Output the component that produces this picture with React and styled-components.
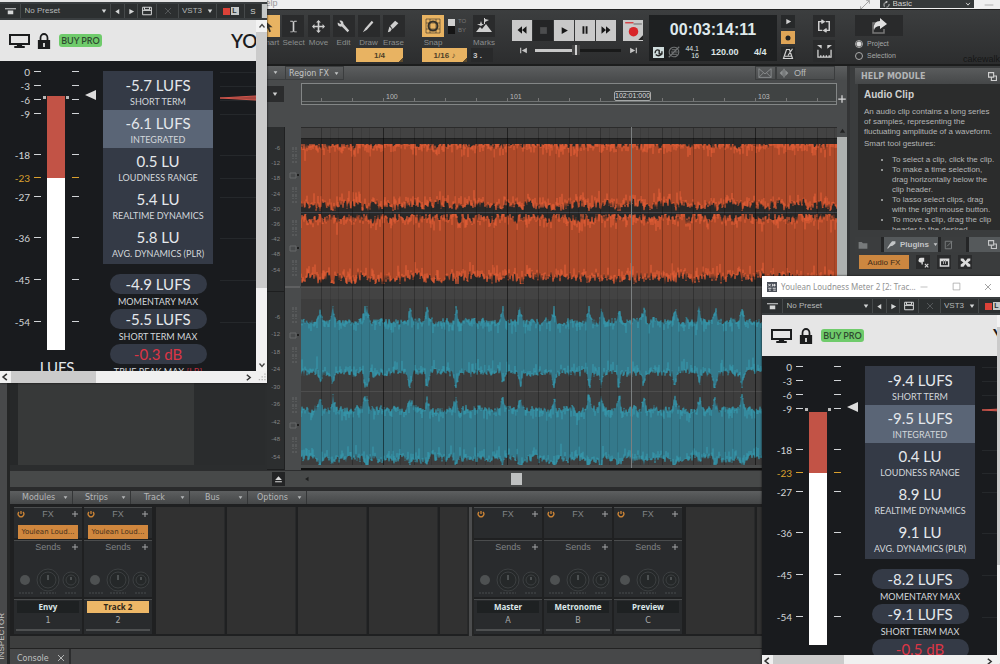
import { useState } from 'react';
import styled, { createGlobalStyle, css } from 'styled-components';

const GlobalStyle = createGlobalStyle`
  * { box-sizing: border-box; }
  body {
    margin: 0;
    background: #2a2b2c;
    font-family: "Liberation Sans", Arial, sans-serif;
    color: #b4b6b6;
  }
  button, select, input { font: inherit; color: inherit; margin: 0; }
  button { border: none; padding: 0; background: none; cursor: pointer; }
  select { appearance: none; border: none; background: none; padding: 0; outline: none; }
  ul { margin: 0; }
`;

/* ---------- icons ---------- */

const paths = {
  cursor: <path d="M4 1v12l3-3 2 5 2-1-2-5h4z" />,
  ibeam: <path d="M4 1h3l1 1 1-1h3v1H9v12h3v1H9l-1-1-1 1H4v-1h3V2H4z" />,
  move: <path d="M8 0l3 3H9v4h4V5l3 3-3 3V9H9v4h2l-3 3-3-3h2V9H3v2L0 8l3-3v2h4V3H5z" />,
  wrench: <path d="M1 3l3 2 1-1-2-3c3-1 5 1 5 4l7 8-2 2-7-7C3 9 0 6 1 3z" />,
  draw: <path d="M1 15l3-5 8-9 2 2-8 9z" />,
  erase: <path d="M1 15l2-7 3 3-2 3zM4 7l6-6 4 3-7 7z" />,
  snap: (
    <g fill="none" stroke="currentColor">
      <path d="M1 1h14v14H1zM5 1v14M11 1v14M1 5h14M1 11h14" strokeWidth="0.6" />
      <circle cx="8" cy="8" r="4.5" strokeWidth="2" />
    </g>
  ),
  marks: <path d="M0 14l4-5 2 2 4-5 6 8zM8 0h1v1l4 1-4 2v2H8zM1 6h3l1-3 1 3h2l-3 2z" />,
  rewind: <path d="M8 3v10L2 8zM14 3v10L8 8z" />,
  forward: <path d="M2 3v10l6-5zM8 3v10l6-5z" />,
  play: <path d="M3 2v12l11-6z" />,
  pause: <path d="M4 2h3v12H4zM9 2h3v12H9z" />,
  stop: <path d="M2 2h12v12H2z" />,
  start: <path d="M2 3h2v10H2zM14 3v10L5 8z" />,
  end: <path d="M12 3h2v10h-2zM2 3v10l9-5z" />,
  record: (
    <>
      <circle cx="8" cy="9" r="4" fill="#d8262a" />
      <path d="M1 1h7v1H1z" fill="#d8262a" />
      <path d="M8 2h7v1H8z" fill="#777" />
      <path d="M12 16h4v-4z" fill="#222" />
    </>
  ),
  dot: <circle cx="8" cy="8" r="5" />,
  metronome: (
    <path d="M6 2h4l4 12H2zM8 10l6-9M4 11h9" fill="none" stroke="currentColor" strokeWidth="1.6" />
  ),
  loop: (
    <path d="M6 3H2v10h4M10 3h4v10h-4M5 1l3 2-3 2M11 11l-3 2 3 2" fill="none" stroke="currentColor" strokeWidth="1.7" />
  ),
  punch: (
    <>
      <path d="M1 6v8h14V6M4 14v-2M7 14v-2M10 14v-2M13 14v-2" fill="none" stroke="currentColor" strokeWidth="1.4" />
      <path d="M0 1h5v4zM16 1h-5v4z" />
    </>
  ),
  share: (
    <>
      <path d="M5 5H2v10h11v-4" fill="none" stroke="#777" strokeWidth="1.5" />
      <path d="M3 12c-1-6 2-9 6-9V0l7 6-7 5V8C6 8 4 9 3 12z" />
    </>
  ),
  sync: (
    <>
      <path d="M0 0h16v16H0z" fill="#cfdcdc" />
      <path d="M3 9c0-4 3-6 6-4v5h4c0-4 0-4 0-4M4 11c3 3 8 2 9-2" fill="none" stroke="#222" strokeWidth="2" />
    </>
  ),
  mute: (
    <path d="M3 12a6 6 0 1 1 10-8 6 6 0 1 1-10 8zM1 15L15 1M5 5h7M4 8h9M5 11h7" fill="none" stroke="currentColor" strokeWidth="1.5" />
  ),
  power: (
    <path d="M8 2v6M4 4a5.6 5.6 0 1 0 8 0" fill="none" stroke="currentColor" strokeWidth="2.6" />
  ),
  plus: <path d="M7 2h2v5h5v2H9v5H7V9H2V7h5z" />,
  eject: <path d="M8 2l6 7H2zM2 11h12v2H2z" />,
  down: <path d="M2 4h12l-6 9z" />,
  left: <path d="M12 2v12L3 8z" />,
  up: <path d="M2 13h12L8 4z" />,
  undock: <path d="M1 1h9v8H1zM6 9v6h9V7h-5" fill="none" stroke="currentColor" strokeWidth="2" />,
  disk: (
    <path d="M1 2h14v12H1zM4 2v4h8V2M1 7h14" fill="none" stroke="currentColor" strokeWidth="1.6" />
  ),
  cross: <path d="M2 2l12 12M14 2L2 14" fill="none" stroke="currentColor" strokeWidth="1.8" />,
  square: <path d="M2 2h12v12H2z" fill="none" stroke="currentColor" strokeWidth="1.2" />,
  minus: <path d="M1 8h14" fill="none" stroke="currentColor" strokeWidth="1.2" />,
  menubar: <path d="M0 2h16v2H0zM4 6h8v7H4z" />,
  monitor: <path d="M0 1h16v11H0zM1.5 3v7h13V3zM6 12h4v1h2v2H4v-2h2z" fillRule="evenodd" />,
  lock: (
    <path d="M1 7h2V5a5 5 0 0 1 10 0v2h2v9H1zM5 7h6V5a3 3 0 0 0-6 0zM7 10v4h2v-4z" fillRule="evenodd" />
  ),
  chevUp: <path d="M3 11l5-6 5 6" fill="none" stroke="currentColor" strokeWidth="2.6" />,
  chevDown: <path d="M3 5l5 6 5-6" fill="none" stroke="currentColor" strokeWidth="2.6" />,
  chevLeft: <path d="M11 3L5 8l6 5" fill="none" stroke="currentColor" strokeWidth="2.6" />,
  chevRight: <path d="M5 3l6 5-6 5" fill="none" stroke="currentColor" strokeWidth="2.6" />,
  grip: <path d="M12 2h2v2h-2zM12 6h2v2h-2zM8 6h2v2H8zM12 10h2v2h-2zM8 10h2v2H8zM4 10h2v2H4z" fill="#b5b5b5" />,
  expand: <path d="M1 15L15 1M1 10v5h5M10 1h5v5" fill="none" stroke="currentColor" strokeWidth="1.4" />,
  swap: <path d="M3 13C1 7 3 3 8 2M8 14c4 0 6-3 6-7M6 0l4 2-4 3" fill="none" stroke="currentColor" strokeWidth="2" />,
  folder: <path d="M1 3h5l2 2h7v9H1z" />,
  plug: <path d="M0 15l5-8 4-5h6v4l-5 4-4 1-4 4zM4 4l4 4" />,
  notes: <path d="M2 2h10v12H2zM5 10l8-8" fill="none" stroke="currentColor" strokeWidth="1.6" />,
  fx: (
    <>
      <path d="M1 4a3 3 0 0 1 3-3h5v6H7v4H5V8H3a3 3 0 0 1-2-4z" />
      <path d="M10 10l5 5M15 10l-5 5" stroke="currentColor" strokeWidth="1.6" />
    </>
  ),
  table: (
    <path d="M1 2h14v12H1zM3 6v6h10V6zM6 5h1v5H6zM9 5h1v5H9z" fillRule="evenodd" />
  ),
  tree: <path d="M1 2h4l3 4 3-4h4v3l-4 3 4 3v3h-4l-3-4-3 4H1v-3l4-3-4-3z" />,
  envelope: <path d="M1 3v10h14V3M1 3l7 6 7-6M1 13l5-5M15 13l-5-5" fill="none" stroke="currentColor" />,
  nudge: <path d="M6 3v10L1 8zM10 3v10l5-5zM7 1h2v14H7z" />,
  app: (
    <>
      <path d="M0 0h16v16H0z" fill="#4a4f58" />
      <path d="M2 3l4 4M6 3L2 7M9 3v4M9 5h5M12 3v4M2 10h5M9 10h5M3 13h3M10 13h4" stroke="#e6e6e6" strokeWidth="1.5" />
    </>
  ),
};

const Glyph = styled.svg`
  display: block;
  flex: none;
  width: ${(p) => p.$w}px;
  height: ${(p) => p.$h || p.$w}px;
  fill: currentColor;
`;

const Icon = ({ name, size = 10, height }) => (
  <Glyph viewBox="0 0 16 16" preserveAspectRatio={height ? 'none' : 'xMidYMid'} $w={size} $h={height} aria-hidden="true">
    {paths[name]}
  </Glyph>
);

/* ---------- desktop ---------- */

const Desktop = styled.div`
  position: relative;
  display: flex;
  flex-direction: column;
  min-height: 100vh;
  overflow: hidden;
  background: #2a2b2c;
`;

const MenuStrip = styled.header`
  display: flex;
  align-items: flex-start;
  justify-content: flex-end;
  gap: 10px;
  height: 9px;
  padding-right: 6px;
  background: #efefef;
  color: #999;
  overflow: hidden;
`;

const HelpLink = styled.a`
  margin-right: auto;
  padding-left: 259px;
  font-size: 9px;
  line-height: 6px;
  color: #999;
  text-decoration: none;
`;

const BasicLabel = styled.label`
  display: flex;
  align-items: center;
  justify-content: space-between;
  width: 94px;
  height: 8px;
  padding: 0 3px;
  background: #353839;
  color: #d0d0d0;
`;

const BasicSelect = styled.select`
  width: 70px;
  height: 8px;
  font-size: 8px;
  line-height: 8px;
`;

const Toolbar = styled.div`
  display: flex;
  height: 57px;
  padding: 5px 0 0 256px;
  background: linear-gradient(#3c3e3f, #2c2d2e);
  border-top: 1px solid #222;
  border-bottom: 2px solid #1c1d1d;
  white-space: nowrap;
`;

const ToolGroup = styled.div`
  display: grid;
  grid-template-columns: repeat(${(p) => p.$cols}, 25px);
  align-content: start;
  justify-items: center;
`;

const ToolItem = styled.div`
  display: flex;
  flex-direction: column;
  align-items: center;
  gap: 1px;
  height: 33px;
  font-size: 8px;
  line-height: 9px;
  color: #8b8e8e;
`;

const ToolButton = styled.button`
  display: grid;
  place-items: center;
  width: 22px;
  height: 22px;
  color: ${(p) => (p.$on ? '#33302a' : '#cfcfcf')};
  background: ${(p) => (p.$on ? '#e8b362' : '#2a2b2c')};
`;

const AmberSelect = styled.select`
  width: ${(p) => p.$w}px;
  height: 14px;
  grid-column: ${(p) => p.$col || 'auto'};
  justify-self: start;
  text-align: center;
  font-size: 8px;
  font-weight: 700;
  background: linear-gradient(315deg, #5d4a2c 3px, #e8b362 3px);
  color: #4e3f28;
`;

const SnapGroup = styled.div`
  display: flex;
  flex-direction: column;
  width: 90px;
  margin-left: 16px;
`;

const SnapRow = styled.div`
  display: flex;
  gap: 4px;
`;

const SnapMode = styled.div`
  display: flex;
  flex-direction: column;
  justify-content: center;
  width: 21px;
  height: 22px;
  font-size: 6px;
  line-height: 9px;
  color: #777;
  padding-left: 10px;
  background: linear-gradient(#d0d0d0 50%, #151515 50%) 0 4px / 7px 15px no-repeat;
`;

const CountSelect = styled.select`
  width: 22px;
  height: 14px;
  padding-left: 2px;
  font-size: 8px;
  font-weight: 700;
  background: #28292a;
  color: #c8c8c8;
`;

const Transport = styled.div`
  display: grid;
  grid-template-rows: 22px 14px;
  row-gap: 2px;
  margin: 4px 0 0 0;
`;

const TransportRow = styled.div`
  display: flex;
  align-items: center;
  gap: 1px;
  color: #ccc;
`;

const Key = styled.button`
  display: grid;
  place-items: center;
  width: 20px;
  height: 21px;
  margin-left: ${(p) => (p.$gap ? 6 : 0)}px;
  background: ${(p) => (p.$dark ? '#242526' : '#c9c9c9')};
  color: ${(p) => (p.$dark ? '#4c4d4e' : '#181818')};
`;

const Seek = styled.button`
  display: grid;
  place-items: center;
  width: 22px;
  height: 12px;
  color: #c4c4c4;
`;

const Position = styled.input`
  appearance: none;
  width: 86px;
  height: 11px;
  background: linear-gradient(90deg, #c8c8c8 38px, #191a1a 38px) 0 4px / 100% 3px no-repeat;
  &::-webkit-slider-thumb {
    appearance: none;
    width: 8px;
    height: 10px;
    background: linear-gradient(90deg, #444 3px, #d0d0d0 3px 5px, #444 5px);
  }
`;

const Clock = styled.div`
  display: flex;
  flex-direction: column;
  width: 128px;
  height: 46px;
  margin-left: 5px;
  background: #1e2021;
`;

const Time = styled.output`
  text-align: center;
  font-size: 16px;
  line-height: 30px;
  font-weight: 700;
  color: #dfe9ec;
`;

const ClockRow = styled.div`
  display: grid;
  grid-template-columns: 15px 15px 16px 43px auto;
  align-items: center;
  height: 14px;
  padding-left: 4px;
  font-size: 9px;
  font-weight: 700;
  color: #dde5e6;
`;

const Rate = styled.span`
  font-size: 7px;
  line-height: 7px;
  font-weight: 400;
  text-align: right;
`;

const Tempo = styled.span`
  padding-left: 12px;
`;

const Meterage = styled.span`
  padding-left: 12px;
`;

const Dim = styled.span`
  color: #707374;
`;

const Stack = styled.div`
  display: flex;
  flex-direction: column;
  gap: 3px;
  margin-left: ${(p) => p.$ml}px;
`;

const MiniKey = styled.button`
  display: grid;
  place-items: center;
  width: 14px;
  height: 13px;
  background: ${(p) => (p.$on ? '#dfa557' : '#27292a')};
  color: ${(p) => (p.$on ? '#222' : '#d0d0d0')};
`;

const ExportButton = styled.button`
  display: grid;
  place-items: center;
  width: 48px;
  height: 21px;
  background: #292a2b;
  color: #e0e0e0;
`;

const RadioLabel = styled.label`
  display: flex;
  align-items: center;
  gap: 4px;
  height: 9px;
  font-size: 7px;
  color: #a5a7a7;
`;

const Radio = styled.input`
  appearance: none;
  width: 8px;
  height: 8px;
  border: 1px solid #aaa;
  border-radius: 50%;
  &:checked { background: radial-gradient(#ddd 2px, #333 3px); }
`;

const Brand = styled.span`
  align-self: flex-end;
  margin-left: auto;
  font-size: 9px;
  line-height: 10px;
  color: #161717;
`;

/* ---------- workspace ---------- */

const Workspace = styled.main`
  display: flex;
  flex: 1;
  min-height: 421px;
  background: #494b4c;
`;

const Rail = styled.div`
  flex: none;
  width: 10px;
  background: linear-gradient(90deg, #48494a 7px, #252626 7px);
`;

const TracksView = styled.section`
  display: flex;
  flex: 1;
  flex-direction: column;
  min-width: 0;
  border-right: 3px solid #343536;
`;

const ViewBar = styled.div`
  display: flex;
  height: 14px;
  padding: 0 12px 0 256px;
  background: linear-gradient(#5c5e5f, #4a4c4d);
`;

const DropButton = styled.button`
  display: grid;
  place-items: center;
  width: 19px;
  border-bottom: 1px solid #3b3d3e;
  color: #c3c5c5;
`;

const RegionButton = styled.button`
  display: flex;
  align-items: center;
  gap: 5px;
  margin-right: auto;
  padding: 0 4px 0 3px;
  border: 1px solid #3b3d3e;
  font-family: "DejaVu Sans", sans-serif;
  font-size: 8px;
  color: #c3c5c5;
`;

const ViewTool = styled.label`
  display: flex;
  align-items: center;
  gap: 5px;
  width: ${(p) => p.$w}px;
  padding-left: 2px;
  border: 1px solid #3b3d3e;
  color: #8e9192;
  font-size: 9px;
`;

const OffSelect = styled.select`
  width: 36px;
  font-size: 9px;
  line-height: 10px;
  color: #b6b8b8;
`;

const RulerRow = styled.div`
  display: flex;
  align-items: flex-start;
  height: 47px;
  padding: 3px 0 0 256px;
  color: #d0d0d0;
`;

const RulerDrop = styled.button`
  flex: none;
  display: grid;
  place-items: center;
  width: 18px;
  height: 16px;
  margin: 3px 17px 0 0;
  background: #2b2c2d;
`;

const Ruler = styled.div`
  position: relative;
  flex: 1;
  display: flex;
  align-items: flex-end;
  min-width: 0;
  height: 22px;
  padding: 0 0 3px 84px;
  overflow: hidden;
  border: 1px solid #838686;
  background:
    linear-gradient(#707373, #707373) 0 17px / 100% 1px no-repeat,
    repeating-linear-gradient(90deg, transparent 0 19px, #777 19px 20px, transparent 20px 31px) 0 14px / 100% 3px no-repeat,
    #404343;
`;

const Bar = styled.span`
  flex: 0 0 124px;
  font-size: 7px;
  line-height: 9px;
  color: #b9bbbb;
`;

const NowBadge = styled.span`
  position: absolute;
  left: 312px;
  top: 7px;
  border: 1px solid #a5a8a8;
  border-radius: 2px;
  background: #3a3d3d;
  font-size: 7px;
  line-height: 8px;
  color: #ddd;
`;

const AddTime = styled.button`
  flex: none;
  width: 10px;
  margin-top: 11px;
  color: #d8d8d8;
`;

const Lanes = styled.div`
  display: flex;
  flex: 1;
  min-height: 343px;
`;

const TrackPane = styled.div`
  width: 257px;
  border-right: 2px solid #2b2d2e;
  border-bottom: 5px solid #2b2d2e;
  background: linear-gradient(90deg, #262829 8px, #373939 8px 184px, #2a2c2d 184px);
`;

const DbScale = styled.div`
  display: flex;
  flex-direction: column;
  width: 18px;
  background: #2c2e2f;
  border-right: 1px solid #202122;
`;

const DbTrack = styled.ul`
  flex: ${(p) => p.$flex} 0 0;
  display: flex;
  flex-direction: column;
  justify-content: space-between;
  padding: ${(p) => p.$pad}px 4px ${(p) => p.$end}px 0;
  border-bottom: 1px solid #1d1e1f;
  list-style: none;
  text-align: right;
  font-size: 6px;
  line-height: 8px;
  color: #858788;
`;

const LaneControls = styled.svg`
  display: block;
  width: 16px;
  height: 100%;
  stroke: #666869;
  fill: none;
`;

const ClipArea = styled.div`
  position: relative;
  flex: 1;
  min-width: 0;
`;

const Wave = styled.svg`
  position: absolute;
  inset: 0;
  width: 100%;
  height: 100%;
`;

const VScroll = styled.div`
  display: flex;
  flex-direction: column;
  align-items: center;
  width: 10px;
  color: #222;
  background: linear-gradient(#494b4c 10px, #adb0af 10px);
`;

const ScrollRow = styled.div`
  display: flex;
  align-items: center;
  height: 17px;
  padding-left: 262px;
  border-top: 1px solid #2c2d2e;
  background: #474949;
  color: #1e1f1f;
`;

const EjectButton = styled.button`
  display: grid;
  place-items: center;
  width: 13px;
  height: 14px;
  margin-right: 19px;
  background: #232425;
  color: #d8d8d8;
`;

const HandleTrack = styled.div`
  flex: 1;
  padding-left: 35%;
`;

const Handle = styled.div`
  width: 11px;
  height: 12px;
  background: #bfc1c1;
`;

/* ---------- side panels ---------- */

const Side = styled.aside`
  flex: none;
  width: 150px;
  padding: 2px 0 0 5px;
  background: #3a3c3d;
`;

const PanelHead = styled.div`
  display: flex;
  align-items: center;
  justify-content: space-between;
  height: 16px;
  padding: 0 3px 0 6px;
  background: linear-gradient(#5a5c5d, #454748);
  color: #d0d0d0;
`;

const PanelTitle = styled.h2`
  margin: 0;
  font-family: "DejaVu Sans", sans-serif;
  font-size: 8px;
  font-weight: 700;
  color: #b3b5b6;
`;

const HelpBody = styled.div`
  height: 146px;
  margin-left: 3px;
  padding: 5px 2px 0 6px;
  overflow: hidden;
  background: #2b2c2c;
  font-size: 8px;
  line-height: 10px;
  white-space: nowrap;
`;

const HelpTitle = styled.h3`
  margin: 0 0 6px;
  font-size: 10px;
  line-height: 12px;
  color: #cfd1d1;
`;

const HelpText = styled.p`
  margin: 0 0 2px;
`;

const HelpList = styled.ul`
  padding: 4px 0 0 28px;
`;

const BrowserTabs = styled.div`
  display: flex;
  align-items: stretch;
  gap: 3px;
  height: 15px;
  margin-top: 7px;
  background: #242526;
`;

const BrowserTab = styled.button`
  flex: none;
  display: flex;
  align-items: center;
  justify-content: ${(p) => (p.$end ? 'flex-end' : 'flex-start')};
  gap: 4px;
  width: ${(p) => p.$w}px;
  padding: 0 3px;
  font-size: 8px;
  font-weight: 700;
  color: ${(p) => (p.$on ? '#c4c6c7' : '#777a7b')};
  background: ${(p) => (p.$on ? '#55595b' : '#3b3d3e')};
`;

const PluginRow = styled.div`
  display: flex;
  align-items: center;
  gap: 7px;
  height: 20px;
  padding-left: 4px;
  color: #dcdcdc;
`;

const FxButton = styled.button`
  width: 50px;
  height: 14px;
  font-size: 8px;
  background: #cc8740;
  color: #3c2a18;
`;

const PluginIcon = styled.button`
  display: grid;
  place-items: center;
  width: 14px;
  height: 14px;
  background: #2a2b2c;
`;

/* ---------- console ---------- */

const ConsoleDock = styled.footer`
  display: flex;
  height: 177px;
  background: #2a2b2c;
`;

const DockRail = styled.div`
  display: flex;
  align-items: flex-end;
  width: 10px;
  padding-bottom: 4px;
  overflow: hidden;
  background: linear-gradient(90deg, #48494a 7px, #252626 7px);
`;

const RailLabel = styled.span`
  writing-mode: vertical-rl;
  transform: rotate(180deg);
  margin-left: -3px;
  font-size: 8px;
  line-height: 9px;
  color: #c8c8c8;
`;

const ConsoleBody = styled.div`
  flex: 1;
  display: flex;
  flex-direction: column;
  min-width: 0;
  padding-top: 4px;
`;

const ModuleBar = styled.nav`
  display: flex;
  height: 13px;
  padding-left: 3px;
  background: linear-gradient(#5d5f60, #454748);
`;

const ModuleButton = styled.button`
  display: flex;
  align-items: center;
  justify-content: space-between;
  width: ${(p) => p.$w}px;
  padding: 0 4px 0 ${(p) => p.$pad}px;
  border-right: 1px solid #343637;
  font-family: "DejaVu Sans", sans-serif;
  font-size: 8px;
  color: #b5b7b8;
`;

const StripRow = styled.div`
  display: flex;
  height: 132px;
  padding: 3px 0 0 4px;
  background: #1f2021;
  overflow: hidden;
`;

const Strip = styled.article`
  flex: none;
  display: flex;
  flex-direction: column;
  gap: 2px;
  width: 70px;
  padding-right: 2px;
  text-align: center;
`;

const StripSection = styled.section`
  height: ${(p) => p.$h}px;
  border-top: 1px solid #4a4c4d;
  background: #292b2d;
`;

const StripHead = styled.div`
  display: flex;
  align-items: center;
  justify-content: space-between;
  height: 12px;
  padding: 0 3px;
  font-size: 9px;
  color: #808385;
`;

const HeadSlot = styled.span`
  width: 8px;
`;

const PowerButton = styled.button`
  width: 8px;
  color: #cf8636;
`;

const AddButton = styled.button`
  width: 8px;
  color: #a2a4a5;
`;

const FxSlot = styled.button`
  width: 60px;
  height: 14px;
  font-family: "DejaVu Sans", sans-serif;
  font-size: 7px;
  background: #d0873e;
  color: #46301c;
`;

const Knobs = styled.svg`
  display: block;
  width: 68px;
  height: 36px;
  margin-top: 6px;
`;

const Name = styled.h4`
  margin: 1px 3px 0;
  font-family: "Open Sans", sans-serif;
  font-size: 8px;
  line-height: 12px;
  font-weight: 700;
  background: ${(p) => (p.$on ? '#edb767' : '#1e2122')};
  color: ${(p) => (p.$on ? '#2f2618' : '#dce8ea')};
`;

const Num = styled.div`
  margin: 0 2px;
  border-bottom: 2px solid #4d4f50;
  font-family: "DejaVu Sans", sans-serif;
  font-size: 8px;
  line-height: 16px;
  color: #a9abac;
`;

const EmptyStrip = styled.div`
  flex: ${(p) => (p.$grow ? 1 : 0)} 0 ${(p) => p.$w || 71}px;
  height: 127px;
  border-left: 2px solid #1f2021;
  border-right: 1px solid #28292a;
  background: #313131;
`;

const Divider = styled.div`
  flex: none;
  width: 6px;
  border-left: 1px solid #242525;
  border-right: 2px solid #242525;
  background: #4b4c4d;
`;

const ConsoleGap = styled.div`
  height: 12px;
  background: #3d3e3e;
`;

const TabBar = styled.div`
  display: flex;
  flex: 1;
  border-top: 1px solid #222;
  background: #474849;
`;

const ConsoleTab = styled.button`
  display: flex;
  align-items: center;
  gap: 8px;
  padding: 3px 4px 0 7px;
  border-right: 2px solid #2c2d2e;
  font-family: "DejaVu Sans", sans-serif;
  font-size: 8px;
  color: #c0c2c2;
`;

/* ---------- plugin windows ---------- */

const PluginWindow = styled.section`
  position: absolute;
  left: ${(p) => p.$x}px;
  top: ${(p) => p.$y}px;
  width: ${(p) => p.$w}px;
  background: #f0f0f0;
  font-family: Lato, sans-serif;
  box-shadow: 0 0 2px #111;
`;

const TitleBar = styled.div`
  display: flex;
  align-items: center;
  gap: 4px;
  height: 21px;
  padding-left: 5px;
  background: #fff;
  font-family: "Noto Sans", sans-serif;
  font-size: 8px;
  color: #929292;
`;

const TitleText = styled.span`
  width: 140px;
  white-space: nowrap;
`;

const TitleButton = styled.button`
  flex: none;
  width: 28px;
  color: #999;
`;

const TopEdge = styled.div`
  height: 2px;
  background: #e4e4e4;
`;

const PresetBar = styled.div`
  display: flex;
  align-items: center;
  height: 18px;
  overflow: hidden;
  background: #3a3e40;
  color: #d5d7d7;
  font-family: "Liberation Sans", sans-serif;
`;

const barCell = css`
  flex: none;
  display: flex;
  align-items: center;
  justify-content: center;
  width: ${(p) => p.$w}px;
  height: 14px;
  border-right: 1px solid #45494a;
  background: ${(p) => (p.$light ? '#c5c8c8' : '#2c2f30')};
`;

const BarButton = styled.button`
  ${barCell}
  font-size: 8px;
  color: ${(p) => (p.$off ? '#595c5d' : '#d5d7d7')};
`;

const BarLabel = styled.label`
  ${barCell}
`;

const PresetSelect = styled.select`
  width: ${(p) => p.$w}px;
  font-size: 8px;
  line-height: 10px;
  color: #b5b8b8;
`;

const RedBox = styled.span`
  width: 7px;
  height: 7px;
  margin-right: 1px;
  background: #dc4238;
`;

const LightBox = styled.span`
  width: 8px;
  font-size: 7px;
  line-height: 8px;
  font-weight: 700;
  background: #c5c8c8;
  color: #2c2f30;
`;

const Frame = styled.div`
  display: flex;
`;

const View = styled.div`
  flex: 1;
  min-width: 0;
  overflow: hidden;
`;

const MeterHeader = styled.div`
  display: flex;
  align-items: center;
  height: 41px;
  padding-left: 9px;
  background: #e6e6e6;
  color: #1b1c1d;
`;

const HeaderButton = styled.button`
  margin-right: 7px;
`;

const BuyButton = styled.button`
  flex: none;
  width: 43px;
  height: 13px;
  margin: 0 129px 0 1px;
  border-radius: 3px;
  font-size: 9px;
  line-height: 13px;
  font-weight: 600;
  background: #6fcb6b;
  color: #2f4a30;
`;

const Logo = styled.h1`
  margin: 0;
  font-size: 19px;
  font-weight: 600;
`;

const MeterBody = styled.div`
  display: flex;
  height: ${(p) => p.$h}px;
  overflow: hidden;
  background: #191b1e;
`;

const Meter = styled.svg`
  flex: none;
  width: 103px;
  height: 320px;
  font-family: Lato, sans-serif;
`;

const Readings = styled.div`
  flex: none;
  width: 110px;
  padding-top: 10px;
  text-align: center;
`;

const Block = styled.dl`
  margin: 0 0 10px;
  padding: 1px 0 2px;
  background: #343a46;
`;

const Cell = styled.div`
  padding: 2px 0;
  background: ${(p) => (p.$on ? '#5a6576' : 'transparent')};
`;

const Value = styled.dd`
  margin: 0;
  font-size: 15px;
  line-height: 22px;
  color: #e4e8ec;
`;

const Caption = styled.dt`
  font-size: 9px;
  line-height: 12px;
  white-space: nowrap;
  color: #d3d7db;
`;

const Pill = styled.div`
  width: 97px;
  margin: 0 auto;
  border-radius: 10px;
  font-size: 15px;
  line-height: 20px;
  background: #343a46;
  color: ${(p) => (p.$red ? '#dc3545' : '#e4e8ec')};
`;

const PillCaption = styled.div`
  font-size: 9px;
  line-height: 15px;
  white-space: nowrap;
  color: #d3d7db;
`;

const Peak = styled.span`
  color: #c03040;
`;

const History = styled.svg`
  flex: 1;
  min-width: 0;
  height: 310px;
`;

const SideScroll = styled.div`
  flex: none;
  display: flex;
  flex-direction: column;
  align-items: center;
  justify-content: space-between;
  width: 11px;
  padding: 2px 0;
  background: linear-gradient(#f2f2f2 12px, #cbcbcb 12px ${(p) => p.$end}px, #f2f2f2 ${(p) => p.$end}px);
  color: #444;
`;

const BottomScroll = styled.div`
  display: flex;
  align-items: center;
  height: 12px;
  color: #333;
`;

const Thumb = styled.div`
  width: ${(p) => p.$w}px;
  height: 12px;
  margin: 0 auto 0 1px;
  background: #cbcbcb;
`;

const ScrollEnd = styled.span`
  margin-right: 3px;
`;

const ticks = [
  [0, 11], [-3, 25], [-6, 39], [-9, 53], [-18, 94], [-23, 117], [-27, 136], [-36, 177], [-45, 219], [-54, 261],
];

const LoudnessMeter = ({ meter }) => (
  <MeterBody $h={meter.bodyHeight}>
    <Meter viewBox="0 0 103 320">
      {ticks.map(([db, y]) => (
        <g key={db} fill={db === -23 ? '#d9a02e' : '#d2d5d8'}>
          <text x="30" y={y + 4} textAnchor="end" fontSize="10">{db}</text>
          <rect x="34" y={y - 1} width="7" height="1" />
          <rect x="72" y={y - 1} width="7" height="1" />
        </g>
      ))}
      <rect x="47" y={meter.level} width="18" height={117 - meter.level} fill="#c25346" />
      <rect x="47" y="117" width="18" height="172" fill="#fff" />
      <rect x="43" y={meter.mark + 1} width="3" height="3" fill="#b8b8b8" />
      <rect x="66" y={meter.mark + 1} width="3" height="3" fill="#b8b8b8" />
      <path d={`M85 ${meter.mark}l11 -5v10z`} fill="#dcdcdc" />
      <text x="57" y="312" textAnchor="middle" fontSize="15" fill="#e4e8ec">LUFS</text>
    </Meter>
    <Readings>
      <Block>
        {meter.readings.map(([value, label], i) => (
          <Cell key={label} $on={i === 1}>
            <Value>{value}</Value>
            <Caption>{label}</Caption>
          </Cell>
        ))}
      </Block>
      {meter.maxima.map(([value, label]) => (
        <div key={label}>
          <Pill $red={value.endsWith('dB')}>{value}</Pill>
          <PillCaption>
            {label}
            {value.endsWith('dB') && <Peak> [LR]</Peak>}
          </PillCaption>
        </div>
      ))}
    </Readings>
    <History viewBox="0 0 44 310" preserveAspectRatio="xMinYMin slice">
      {ticks.map(([db, y]) => (
        <rect key={db} x="7" y={y} width="60" height="1" fill="#25282b" />
      ))}
      <path d={`M7 ${meter.mark + 3}L60 ${meter.mark}v6z`} fill="#a5453e" stroke="#cf564c" />
    </History>
  </MeterBody>
);

const PluginBar = () => (
  <PresetBar>
    <BarButton $w={21} aria-label="Menu"><Icon name="menubar" size={11} height={9} /></BarButton>
    <BarLabel $w={90}>
      <PresetSelect $w={76} aria-label="Preset"><option>No Preset</option></PresetSelect>
      <Icon name="down" size={6} />
    </BarLabel>
    <BarButton $w={14} aria-label="Previous preset"><Icon name="left" size={7} /></BarButton>
    <BarButton $w={13} aria-label="Next preset"><Icon name="play" size={7} /></BarButton>
    <BarButton $w={19} aria-label="Save preset"><Icon name="disk" size={10} /></BarButton>
    <BarButton $w={22} $off aria-label="Delete preset"><Icon name="cross" size={8} /></BarButton>
    <BarLabel $w={38}>
      <PresetSelect $w={25} aria-label="Format"><option>VST3</option></PresetSelect>
      <Icon name="down" size={6} />
    </BarLabel>
    <BarButton $w={28} aria-label="Left right"><RedBox /><LightBox>L</LightBox></BarButton>
    <BarButton $w={17}>S</BarButton>
    <BarButton $w={8} $light aria-label="More" />
  </PresetBar>
);

const MeterWindow = ({ meter }) => (
  <PluginWindow $x={meter.x} $y={meter.y} $w={meter.width}>
    {meter.title ? (
      <TitleBar>
        <Icon name="app" size={10} />
        <TitleText>{meter.title}</TitleText>
        <TitleButton aria-label="Minimize"><Icon name="minus" size={8} /></TitleButton>
        <TitleButton aria-label="Maximize"><Icon name="square" size={9} /></TitleButton>
        <TitleButton aria-label="Close"><Icon name="cross" size={8} /></TitleButton>
      </TitleBar>
    ) : <TopEdge />}
    <PluginBar />
    <Frame>
      <View>
        <MeterHeader>
          <HeaderButton aria-label="Display"><Icon name="monitor" size={21} height={16} /></HeaderButton>
          <HeaderButton aria-label="Lock"><Icon name="lock" size={14} height={16} /></HeaderButton>
          <BuyButton>BUY PRO</BuyButton>
          <Logo>YOULEAN</Logo>
        </MeterHeader>
        <LoudnessMeter meter={meter} />
      </View>
      <SideScroll $end={meter.scrollEnd}>
        <Icon name="chevUp" size={8} />
        <Icon name="chevDown" size={8} />
      </SideScroll>
    </Frame>
    <BottomScroll>
      <Icon name="chevLeft" size={10} />
      <Thumb $w={meter.thumb} />
      <ScrollEnd><Icon name="chevRight" size={9} /></ScrollEnd>
      <Icon name="grip" size={11} />
    </BottomScroll>
  </PluginWindow>
);

const meters = [
  {
    x: 0, y: 0, width: 267, bodyHeight: 310, level: 35, mark: 34, scrollEnd: 268, thumb: 85,
    readings: [
      ['-5.7 LUFS', 'SHORT TERM'],
      ['-6.1 LUFS', 'INTEGRATED'],
      ['0.5 LU', 'LOUDNESS RANGE'],
      ['5.4 LU', 'REALTIME DYNAMICS'],
      ['5.8 LU', 'AVG. DYNAMICS (PLR)'],
    ],
    maxima: [
      ['-4.9 LUFS', 'MOMENTARY MAX'],
      ['-5.5 LUFS', 'SHORT TERM MAX'],
      ['-0.3 dB', 'TRUE PEAK MAX'],
    ],
  },
  {
    x: 762, y: 276, width: 246, bodyHeight: 299, level: 56, mark: 51, scrollEnd: 250, thumb: 71,
    title: 'Youlean Loudness Meter 2 [2: Trac...',
    readings: [
      ['-9.4 LUFS', 'SHORT TERM'],
      ['-9.5 LUFS', 'INTEGRATED'],
      ['0.4 LU', 'LOUDNESS RANGE'],
      ['8.9 LU', 'REALTIME DYNAMICS'],
      ['9.1 LU', 'AVG. DYNAMICS (PLR)'],
    ],
    maxima: [
      ['-8.2 LUFS', 'MOMENTARY MAX'],
      ['-9.1 LUFS', 'SHORT TERM MAX'],
      ['-0.5 dB', 'TRUE PEAK MAX'],
    ],
  },
];

/* ---------- waveforms ---------- */

const random = (seed) => {
  let s = seed;
  return () => {
    s = (s * 16807) % 2147483647;
    return s / 2147483647;
  };
};

const spikes = [19, 32, 64, 66, 109, 126, 155, 202, 219, 253, 288, 300, 318, 343, 374, 398, 414, 441, 467, 498, 520];

// edge of a lane: dir is where the peaks point, limit is where the signal clips
const edge = (seed, base, jitter, dir, spike, limit) => {
  const rnd = random(seed);
  const points = [];
  let swell = 0;
  for (let x = 0; x <= 536; x += 1) {
    if (x % 7 === 0) swell = rnd() * jitter * 0.5;
    const near = Math.min(...spikes.map((p) => Math.abs(p - x)));
    const peak = near < 3 ? spike * (1 - near / 3) * (0.7 + rnd() * 0.5) : 0;
    const y = base + dir * (rnd() * jitter * 0.9 + swell + peak);
    points.push([x, dir < 0 ? Math.max(y, limit) : Math.min(y, limit)]);
  }
  return points;
};

const join = (points) => points.map(([x, y]) => `${x} ${y.toFixed(1)}`).join('L');

const fillPath = (top, bottom) => `M${join(top)}L${join([...bottom].reverse())}Z`;

const edgePath = (points, dir, depth, seed) => {
  const rnd = random(seed);
  return points.map(([x, y]) => `M${x} ${y.toFixed(1)}v${(-dir * rnd() * rnd() * depth).toFixed(1)}`).join('');
};

const lane = (seed, top, bottom) => {
  const a = edge(seed, top.base, top.jitter, -1, top.spike, top.limit);
  const b = edge(seed + 77, bottom.base, bottom.jitter, 1, bottom.spike, bottom.limit);
  return { id: seed, fill: fillPath(a, b), edges: edgePath(a, -1, 13, seed + 5) + edgePath(b, 1, 13, seed + 9) };
};

const orangeLanes = [
  lane(31111, { base: 24, jitter: 11, spike: 0, limit: 17 }, { base: 71, jitter: 10, spike: 2, limit: 84 }),
  lane(97753, { base: 98, jitter: 10, spike: 2, limit: 87 }, { base: 143, jitter: 11, spike: 2, limit: 157 }),
];

const blueLanes = [
  lane(45119, { base: 199, jitter: 7, spike: 14, limit: 179 }, { base: 241, jitter: 7, spike: 15, limit: 261 }),
  lane(70133, { base: 287, jitter: 7, spike: 14, limit: 267 }, { base: 326, jitter: 8, spike: 8, limit: 338 }),
];

const gridX = Array.from({ length: 17 }, (_, i) => 20 + i * 31);

const Waveforms = () => (
  <Wave viewBox="0 0 536 343" preserveAspectRatio="none">
    <rect width="536" height="343" fill="#434343" />
    <rect y="11" width="536" height="148" fill="#282828" />
    <rect y="172" width="536" height="166" fill="#3d3d3d" />
    <rect y="11" width="536" height="1" fill="#1f1f1f" />
    <rect y="85" width="536" height="1" fill="#42464c" />
    <rect y="160" width="536" height="1" fill="#515151" />
    <rect y="264" width="536" height="1" fill="#4d4d4d" />
    {orangeLanes.map((l) => (
      <g key={l.id}>
        <path d={l.fill} fill="#ae4929" />
        <path d={l.edges} stroke="#e86038" fill="none" />
      </g>
    ))}
    {blueLanes.map((l) => (
      <g key={l.id}>
        <path d={l.fill} fill="#34798b" />
        <path d={l.edges} stroke="#379cb0" fill="none" />
      </g>
    ))}
    {gridX.map((x, i) => (
      <g key={x} fill="#000">
        <rect x={x} width="1" height="338" opacity={i % 4 === 2 ? 0.5 : 0.25} />
        <rect x={x + 9} width="1" height="338" opacity="0.1" />
        <rect x={x + 17} width="1" height="338" opacity="0.1" />
      </g>
    ))}
    <rect width="536" height="1" fill="#2b2b2b" />
    <rect y="338" width="536" height="3" fill="#484a4a" />
    <rect y="341" width="536" height="2" fill="#101010" />
    <rect x="330" width="1" height="341" fill="#7b7f80" />
  </Wave>
);

const dbMarks = [-6, -12, -18, -24, -30, -36, -42, -48, -54];

const LaneStrip = () => (
  <LaneControls viewBox="0 0 16 343" preserveAspectRatio="none">
    {[0, 73, 160, 250].map((y) => (
      <g key={y}>
        <path d={`M8 ${y + 20}v16M11 ${y + 20}v16M8 ${y + 60}v16M11 ${y + 60}v16`} strokeDasharray="3 1 1 2" />
        <path d={`M5 ${y + 46}h6v5H5z`} />
        <path d={`M12 ${y + 48}h2`} stroke="#1e1e1e" strokeWidth="2" />
      </g>
    ))}
    <path d="M0 160h15" stroke="#777" />
  </LaneControls>
);

const ConsoleStrip = ({ name, number, plugin, selected }) => (
  <Strip>
    <StripSection $h={31}>
      <StripHead>
        <PowerButton aria-label={`${name} FX power`}><Icon name="power" size={8} /></PowerButton>
        FX
        <AddButton aria-label={`Add FX to ${name}`}><Icon name="plus" size={8} /></AddButton>
      </StripHead>
      {plugin && <FxSlot>{plugin}</FxSlot>}
    </StripSection>
    <StripSection $h={57}>
      <StripHead>
        <HeadSlot />
        Sends
        <AddButton aria-label={`Add send to ${name}`}><Icon name="plus" size={8} /></AddButton>
      </StripHead>
      <Knobs viewBox="0 0 68 36">
        <circle cx="11" cy="21" r="5" fill="#4e5152" />
        <g fill="#252829" stroke="#3c3f41">
          <circle cx="34" cy="21" r="11" />
          <circle cx="34" cy="21" r="8" />
          <circle cx="57" cy="21" r="8" />
          <circle cx="57" cy="21" r="5" />
        </g>
        <path d="M34 21v-5M57 21v-3" stroke="#777a7c" />
        <path d="M5 34h14M26 34h16M51 34h12" stroke="#383b3d" strokeWidth="2" strokeDasharray="2 1" />
      </Knobs>
    </StripSection>
    <StripSection $h={35}>
      <Name $on={selected}>{name}</Name>
      <Num>{number}</Num>
    </StripSection>
  </Strip>
);

const modules = [
  ['Modules', 60, 9],
  ['Strips', 58, 12],
  ['Track', 59, 13],
  ['Bus', 58, 15],
  ['Options', 59, 9],
];

const tools = [
  ['Smart', 'cursor'],
  ['Select', 'ibeam'],
  ['Move', 'move'],
  ['Edit', 'wrench'],
  ['Draw', 'draw'],
  ['Erase', 'erase'],
];

const App = () => {
  const [tool, setTool] = useState('Smart');
  const [scope, setScope] = useState('Project');

  return (
    <>
      <GlobalStyle />
      <Desktop>
        <MenuStrip>
          <HelpLink href="#help">Help</HelpLink>
          <Icon name="expand" size={10} />
          <BasicLabel>
            <Icon name="swap" size={7} />
            <BasicSelect aria-label="Workspace"><option>Basic</option></BasicSelect>
            <Icon name="chevDown" size={6} />
          </BasicLabel>
          <Icon name="minus" size={10} />
        </MenuStrip>

        <Toolbar>
          <ToolGroup $cols={6}>
            {tools.map(([label, icon]) => (
              <ToolItem key={label}>
                <ToolButton $on={tool === label} onClick={() => setTool(label)} aria-label={label}>
                  <Icon name={icon} size={13} />
                </ToolButton>
                {label}
              </ToolItem>
            ))}
            <AmberSelect $w={47} $col="5 / 7" aria-label="Draw resolution"><option>1/4</option></AmberSelect>
          </ToolGroup>

          <SnapGroup>
            <SnapRow>
              <ToolItem>
                <ToolButton $on aria-label="Snap"><Icon name="snap" size={16} /></ToolButton>
                Snap
              </ToolItem>
              <SnapMode><span>TO</span><span>BY</span></SnapMode>
              <ToolItem>
                <ToolButton aria-label="Marks"><Icon name="marks" size={16} /></ToolButton>
                Marks
              </ToolItem>
            </SnapRow>
            <SnapRow>
              <AmberSelect $w={45} aria-label="Snap resolution"><option>1/16 ♪</option></AmberSelect>
              <CountSelect aria-label="Snap count"><option>3  .</option></CountSelect>
            </SnapRow>
          </SnapGroup>

          <Transport>
            <TransportRow>
              <Key aria-label="Rewind"><Icon name="rewind" size={12} /></Key>
              <Key $dark aria-label="Stop"><Icon name="stop" size={9} /></Key>
              <Key aria-label="Play"><Icon name="play" size={9} /></Key>
              <Key aria-label="Pause"><Icon name="pause" size={10} /></Key>
              <Key aria-label="Forward"><Icon name="forward" size={12} /></Key>
              <Key $gap aria-label="Record"><Icon name="record" size={19} /></Key>
            </TransportRow>
            <TransportRow>
              <Seek aria-label="Go to start"><Icon name="start" size={9} /></Seek>
              <Position type="range" defaultValue="48" aria-label="Position" />
              <Seek aria-label="Go to end"><Icon name="end" size={9} /></Seek>
            </TransportRow>
          </Transport>

          <Clock>
            <Time>00:03:14:11</Time>
            <ClockRow>
              <Icon name="sync" size={11} />
              <Dim><Icon name="mute" size={12} /></Dim>
              <Rate>44.1<br />16</Rate>
              <Tempo>120.00</Tempo>
              <Meterage>4/4</Meterage>
            </ClockRow>
          </Clock>

          <Stack $ml={4}>
            <MiniKey aria-label="Audition"><Icon name="play" size={7} /></MiniKey>
            <MiniKey $on aria-label="Arm"><Icon name="dot" size={8} /></MiniKey>
            <MiniKey aria-label="Metronome"><Icon name="metronome" size={12} /></MiniKey>
          </Stack>

          <Stack $ml={18}>
            <ToolButton aria-label="Loop"><Icon name="loop" size={14} /></ToolButton>
            <ToolButton aria-label="Punch"><Icon name="punch" size={15} /></ToolButton>
          </Stack>

          <Stack $ml={20}>
            <ExportButton aria-label="Export"><Icon name="share" size={16} /></ExportButton>
            {['Project', 'Selection'].map((name) => (
              <RadioLabel key={name}>
                <Radio type="radio" name="scope" checked={scope === name} onChange={() => setScope(name)} />
                {name}
              </RadioLabel>
            ))}
          </Stack>

          <Brand>cakewalk</Brand>
        </Toolbar>

        <Workspace>
          <Rail />
          <TracksView>
            <ViewBar>
              <DropButton aria-label="Track options"><Icon name="down" size={5} /></DropButton>
              <RegionButton>Region FX <Icon name="down" size={5} /></RegionButton>
              <ViewTool $w={21}><Icon name="envelope" size={14} /></ViewTool>
              <ViewTool $w={59}>
                <Icon name="nudge" size={10} />
                <OffSelect aria-label="Nudge"><option>Off</option></OffSelect>
              </ViewTool>
            </ViewBar>
            <RulerRow>
              <RulerDrop aria-label="Ruler options"><Icon name="down" size={6} /></RulerDrop>
              <Ruler>
                <Bar>100</Bar>
                <Bar>101</Bar>
                <Bar />
                <Bar>103</Bar>
                <NowBadge>102:01:000</NowBadge>
              </Ruler>
              <AddTime aria-label="Add ruler"><Icon name="plus" size={10} /></AddTime>
            </RulerRow>
            <Lanes>
              <TrackPane />
              <DbScale>
                <DbTrack $flex={160} $pad={17} $end={17}>
                  {dbMarks.map((db) => <li key={db}>{db}</li>)}
                </DbTrack>
                <DbTrack $flex={183} $pad={21} $end={8}>
                  {dbMarks.map((db) => <li key={db}>{db}</li>)}
                </DbTrack>
              </DbScale>
              <LaneStrip />
              <ClipArea>
                <Waveforms />
              </ClipArea>
              <VScroll><Icon name="up" size={7} /></VScroll>
            </Lanes>
            <ScrollRow>
              <EjectButton aria-label="Show panel"><Icon name="eject" size={9} /></EjectButton>
              <Icon name="left" size={6} />
              <HandleTrack><Handle /></HandleTrack>
            </ScrollRow>
          </TracksView>

          <Side>
            <PanelHead>
              <PanelTitle>HELP MODULE</PanelTitle>
              <Icon name="undock" size={9} />
            </PanelHead>
            <HelpBody>
              <HelpTitle>Audio Clip</HelpTitle>
              <HelpText>
                An audio clip contains a long series<br />
                of samples, representing the<br />
                fluctuating amplitude of a waveform.
              </HelpText>
              <HelpText>Smart tool gestures:</HelpText>
              <HelpList>
                <li>To select a clip, click the clip.</li>
                <li>To make a time selection,<br />drag horizontally below the<br />clip header.</li>
                <li>To lasso select clips, drag<br />with the right mouse button.</li>
                <li>To move a clip, drag the clip<br />header to the desired</li>
              </HelpList>
            </HelpBody>
            <BrowserTabs>
              <BrowserTab $w={26} aria-label="Media"><Icon name="folder" size={10} /></BrowserTab>
              <BrowserTab $w={54} $on><Icon name="plug" size={9} />Plugins<Icon name="down" size={5} /></BrowserTab>
              <BrowserTab $w={25} aria-label="Notes"><Icon name="notes" size={10} /></BrowserTab>
              <BrowserTab $w={31} $on $end aria-label="Undock"><Icon name="undock" size={9} /></BrowserTab>
            </BrowserTabs>
            <PluginRow>
              <FxButton>Audio FX</FxButton>
              <PluginIcon aria-label="Instruments"><Icon name="fx" size={11} /></PluginIcon>
              <PluginIcon aria-label="MIDI FX"><Icon name="table" size={11} /></PluginIcon>
              <PluginIcon aria-label="ReWire"><Icon name="tree" size={11} /></PluginIcon>
            </PluginRow>
          </Side>
        </Workspace>

        <ConsoleDock>
          <DockRail><RailLabel>INSPECTOR</RailLabel></DockRail>
          <ConsoleBody>
            <ModuleBar>
              {modules.map(([label, width, pad]) => (
                <ModuleButton key={label} $w={width} $pad={pad}>
                  {label}<Icon name="down" size={5} />
                </ModuleButton>
              ))}
            </ModuleBar>
            <StripRow>
              <ConsoleStrip name="Envy" number="1" plugin="Youlean Loud..." />
              <ConsoleStrip name="Track 2" number="2" plugin="Youlean Loud..." selected />
              <EmptyStrip />
              <EmptyStrip />
              <EmptyStrip />
              <EmptyStrip />
              <EmptyStrip $w={30} />
              <Divider />
              <ConsoleStrip name="Master" number="A" />
              <ConsoleStrip name="Metronome" number="B" />
              <ConsoleStrip name="Preview" number="C" />
              <EmptyStrip />
              <EmptyStrip $grow />
            </StripRow>
            <ConsoleGap />
            <TabBar>
              <ConsoleTab>Console <Icon name="cross" size={8} /></ConsoleTab>
            </TabBar>
          </ConsoleBody>
        </ConsoleDock>

        {meters.map((meter) => <MeterWindow key={meter.x} meter={meter} />)}
      </Desktop>
    </>
  );
};

export default App;
